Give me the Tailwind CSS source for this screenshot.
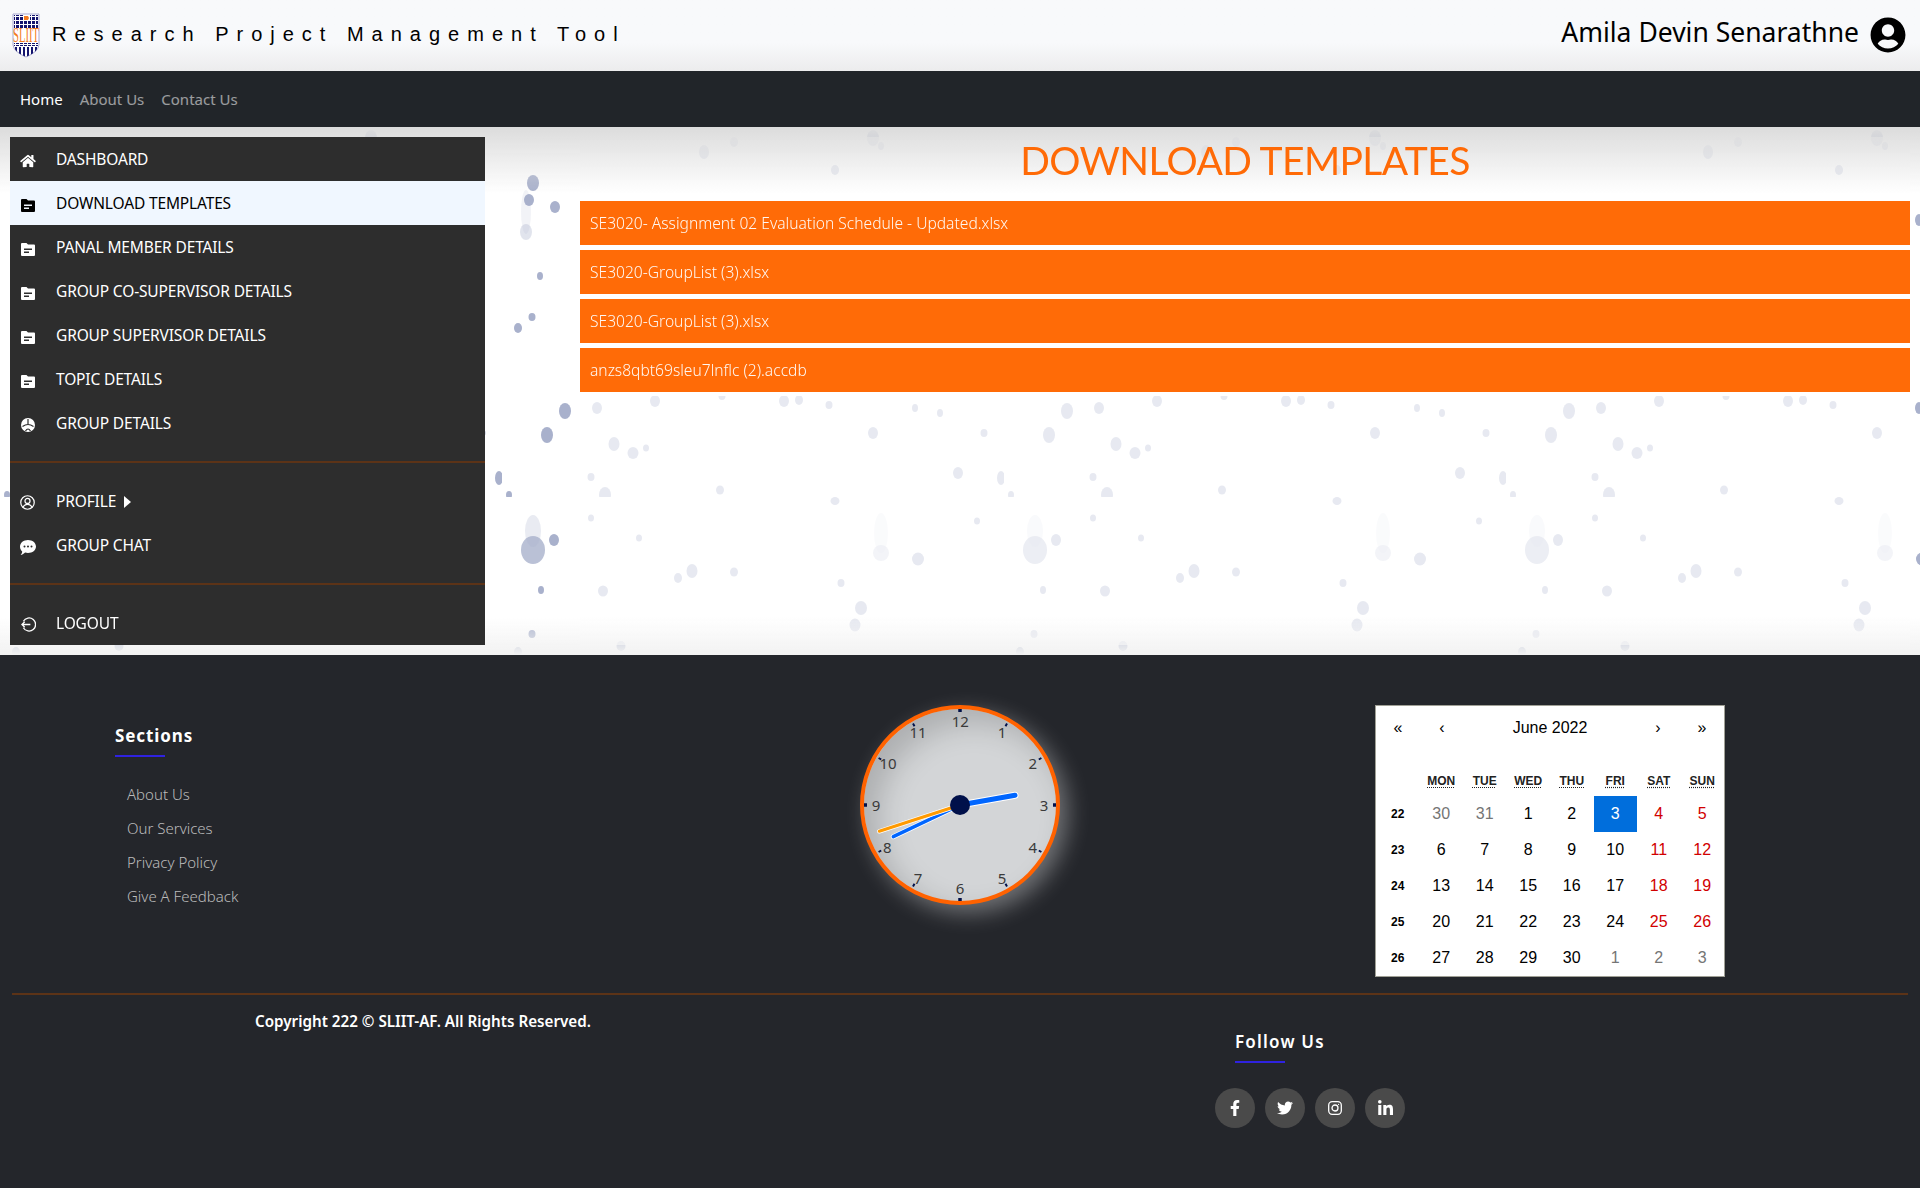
<!DOCTYPE html>
<html lang="en">
<head>
    <meta charset="UTF-8">
    <meta name="viewport" content="width=device-width, initial-scale=1.0">
    <title>Research Project Management Tool</title>
    <script src="https://cdn.jsdelivr.net/npm/@tailwindcss/browser@4"></script>
</head>
<body class="font-['Noto_Sans',sans-serif] bg-[#24262b] overflow-hidden">
    <!-- header -->
    <header class="h-[71px] flex items-center justify-between bg-gradient-to-b from-[#f8f9fb] from-60% to-[#ececed]">
        <div class="flex items-center pl-3">
            <svg class="w-7 h-[45px] mb-[1px]" viewBox="0 0 28 45">
                <defs>
                    <pattern id="logo-grid" patternUnits="userSpaceOnUse" width="4" height="4"><rect width="3" height="3" fill="#14146e"/></pattern>
                    <clipPath id="logo-shield"><path d="M1 1h26v31q-1 7-13 12Q2 39 1 32z"/></clipPath>
                </defs>
                <path d="M1 1h26v31q-1 7-13 12Q2 39 1 32z" fill="#fff" stroke="#a9a9d0"/>
                <g clip-path="url(#logo-shield)">
                    <rect x="2" y="2" width="24" height="13" fill="url(#logo-grid)"/>
                    <rect x="11" y="2" width="7" height="6" fill="#fff"/>
                    <path d="M12 3h4l1 2-1 2h-4z" fill="#f47b20"/>
                    <rect x="2" y="30" width="24" height="3" fill="url(#logo-grid)"/>
                    <path d="M3 34h2v10H3zM7 34h2v10H7zM11 34h2v10h-2zM15 34h2v10h-2zM19 34h2v10h-2zM23 34h2v10h-2z" fill="#14146e"/>
                </g>
                <text transform="scale(1,2)" x="14" y="14.500" text-anchor="middle" fill="#f47b20" font-family="Liberation Serif" font-size="10.600">SLIIT</text>
            </svg>
            <span class="ml-3 mb-1 font-['Liberation_Sans',sans-serif] text-[20px] tracking-[8px] text-black">Research Project Management Tool</span>
        </div>
        <div class="flex items-center pr-[14px]">
            <span class="mb-[6px] text-[26.500px] text-black">Amila Devin Senarathne</span>
            <svg class="w-9 h-9 ml-[11px] mb-[1px]" viewBox="0 0 496 512" fill="#000"><path d="M248 8C111 8 0 119 0 256s111 248 248 248 248-111 248-248S385 8 248 8zm0 96c48.6 0 88 39.4 88 88s-39.4 88-88 88-88-39.4-88-88 39.4-88 88-88zm0 344c-58.7 0-111.3-26.6-146.5-68.2 18.8-35.4 55.6-59.8 98.5-59.8 2.4 0 4.8.4 7.1 1.1 13 4.2 26.6 6.9 40.9 6.9 14.3 0 28-2.7 40.9-6.9 2.3-.7 4.7-1.1 7.1-1.1 42.9 0 79.7 24.4 98.5 59.8C359.3 421.4 306.7 448 248 448z"/></svg>
        </div>
    </header>

    <!-- navbar -->
    <nav class="h-14 bg-[#212529] flex items-center pl-5 gap-[17px] text-[15px]">
        <a class="text-white">Home</a>
        <a class="text-white/55">About Us</a>
        <a class="text-white/55">Contact Us</a>
    </nav>

    <!-- main -->
    <section class="relative h-[528px] bg-white overflow-hidden">
        <!-- raindrop background -->
        <svg class="absolute inset-0 w-full h-full" width="1920" height="528">
            <defs>
                <filter id="soft"><feGaussianBlur stdDeviation="0.7"/></filter>
                <pattern id="drops" patternUnits="userSpaceOnUse" x="502" y="52" width="502" height="318">
                    <g fill="#a9b1cc" filter="url(#soft)">
                        <ellipse cx="63" cy="232" rx="6" ry="8"/><ellipse cx="45" cy="256" rx="6" ry="8"/><ellipse cx="499" cy="299" rx="4" ry="7"/><ellipse cx="7" cy="316" rx="3" ry="4"/>
                        <ellipse cx="31" cy="53" rx="12" ry="14" opacity=".8"/><ellipse cx="31" cy="34" rx="8" ry="16" opacity=".25"/><ellipse cx="52" cy="43" rx="5" ry="6"/><ellipse cx="39" cy="93" rx="3" ry="4"/><ellipse cx="30" cy="137" rx="3.500" ry="4"/><ellipse cx="16" cy="155" rx="4" ry="5"/>
                        <ellipse cx="119" cy="149" rx="4.500" ry="5"/><ellipse cx="95" cy="229" rx="5" ry="6"/><ellipse cx="153" cy="222" rx="5" ry="6"/><ellipse cx="220" cy="217" rx="3.500" ry="4"/><ellipse cx="282" cy="222" rx="5" ry="6"/><ellipse cx="297" cy="221" rx="4" ry="5"/><ellipse cx="327" cy="226" rx="3.500" ry="4"/>
                        <ellipse cx="413" cy="229" rx="3" ry="4"/><ellipse cx="438" cy="234" rx="3" ry="4"/><ellipse cx="371" cy="254" rx="5" ry="6"/><ellipse cx="482" cy="254" rx="3.500" ry="4"/><ellipse cx="456" cy="294" rx="5" ry="6"/><ellipse cx="112" cy="265" rx="5.500" ry="7"/><ellipse cx="131" cy="274" rx="5.500" ry="6"/><ellipse cx="144" cy="269" rx="3" ry="3.500"/>
                        <ellipse cx="89" cy="298" rx="3.500" ry="4"/><ellipse cx="103" cy="316" rx="6" ry="8"/><ellipse cx="218" cy="311" rx="4" ry="4.500"/><ellipse cx="333" cy="4" rx="4.500" ry="4"/><ellipse cx="89" cy="21" rx="3" ry="3.500"/><ellipse cx="137" cy="41" rx="3" ry="3.500"/><ellipse cx="190" cy="74" rx="5.500" ry="7"/><ellipse cx="176" cy="81" rx="4" ry="5"/><ellipse cx="232" cy="75" rx="4" ry="4.500"/>
                        <ellipse cx="339" cy="86" rx="3.500" ry="4"/><ellipse cx="379" cy="56" rx="8" ry="8" opacity=".5"/><ellipse cx="379" cy="36" rx="7" ry="20" opacity=".2"/><ellipse cx="416" cy="62" rx="6" ry="6.500"/><ellipse cx="475" cy="24" rx="3" ry="3.500"/><ellipse cx="359" cy="111" rx="6" ry="7"/><ellipse cx="353" cy="128" rx="5.500" ry="6.500"/><ellipse cx="101" cy="94" rx="5" ry="5.500"/>
                    </g>
                </pattern>
                <pattern id="drops-top" patternUnits="userSpaceOnUse" x="502" y="0" width="502" height="64">
                    <g fill="#a9b1cc" filter="url(#soft)">
                        <ellipse cx="371" cy="11" rx="6" ry="8"/><ellipse cx="379" cy="19" rx="3" ry="4"/><ellipse cx="202" cy="25" rx="5" ry="7"/><ellipse cx="232" cy="15" rx="4" ry="5"/><ellipse cx="333" cy="43" rx="4" ry="5"/>
                    </g>
                </pattern>
                <linearGradient id="fade-top" x1="0" y1="0" x2="0" y2="1"><stop offset="0" stop-color="#dcdcdc"/><stop offset="1" stop-color="#dcdcdc" stop-opacity="0"/></linearGradient>
                <linearGradient id="fade-bottom" x1="0" y1="0" x2="0" y2="1"><stop offset="0" stop-color="#f2f2f2" stop-opacity="0"/><stop offset="1" stop-color="#f2f2f2"/></linearGradient>
            </defs>
            <rect x="0" y="269" width="1920" height="259" fill="url(#drops)"/>
            <rect x="0" y="0" width="1920" height="52" fill="url(#drops-top)"/>
            <!-- drops beside the file list -->
            <g fill="#a9b1cc" filter="url(#soft)">
                <ellipse cx="533" cy="56" rx="6" ry="8"/><ellipse cx="529" cy="73" rx="5" ry="6"/><ellipse cx="555" cy="80" rx="5" ry="6"/>
                <ellipse cx="526" cy="105" rx="6" ry="8" opacity=".35"/><ellipse cx="526" cy="85" rx="5" ry="22" opacity=".15"/>
                <ellipse cx="540" cy="149" rx="3" ry="4"/><ellipse cx="532" cy="190" rx="3.500" ry="4"/><ellipse cx="518" cy="201" rx="4" ry="5"/>
                <ellipse cx="1919" cy="93" rx="4" ry="6"/><ellipse cx="1919" cy="281" rx="4" ry="6"/>
            </g>
            <rect x="580" y="10" width="1330" height="508" fill="#fff" fill-opacity=".72"/>
            <rect x="0" y="0" width="1920" height="66" fill="url(#fade-top)"/>
            <rect x="0" y="490" width="1920" height="38" fill="url(#fade-bottom)"/>
        </svg>

        <div class="relative flex h-full pt-[10px]">
            <!-- sidebar -->
            <aside class="ml-[10px] w-[475px] h-[508px] bg-[#2d2d2d] text-white text-[15.500px] tracking-[-0.15px]">
                <a class="h-11 flex items-center">
                    <svg class="w-[16px] h-[14px] ml-[10px] mt-[4px]" viewBox="0 0 576 512" fill="currentColor"><path d="M280.37 148.26L96 300.11V464a16 16 0 0 0 16 16l112.06-.29a16 16 0 0 0 15.92-16V368a16 16 0 0 1 16-16h64a16 16 0 0 1 16 16v95.64a16 16 0 0 0 16 16.05L464 480a16 16 0 0 0 16-16V300L295.67 148.26a12.19 12.19 0 0 0-15.3 0zM571.6 251.47L488 182.56V44.05a12 12 0 0 0-12-12h-56a12 12 0 0 0-12 12v72.61L318.47 43a48 48 0 0 0-61 0L4.34 251.47a12 12 0 0 0-1.6 16.9l25.5 31A12 12 0 0 0 45.15 301l235.22-193.74a12.19 12.19 0 0 1 15.3 0L530.9 301a12 12 0 0 0 16.9-1.6l25.5-31a12 12 0 0 0-1.7-16.93z"/></svg>
                    <span class="ml-[20px] mt-[2px]">DASHBOARD</span>
                </a>
                <a class="h-11 flex items-center bg-[#f0f7ff] text-black">
                    <svg class="w-[14px] h-[14px] ml-[11px] mt-[3px]" viewBox="0 0 14 14" fill="currentColor"><path fill-rule="evenodd" d="M1 1h4.500l1.500 1.500h6a1 1 0 0 1 1 1V13a1 1 0 0 1-1 1H1a1 1 0 0 1-1-1V2a1 1 0 0 1 1-1zM3 6.500V8h8V6.500zM3 9.500V11h5V9.500z"/></svg>
                    <span class="ml-[21px] mt-[2px]">DOWNLOAD TEMPLATES</span>
                </a>
                <a class="h-11 flex items-center">
                    <svg class="w-[14px] h-[14px] ml-[11px] mt-[3px]" viewBox="0 0 14 14" fill="currentColor"><path fill-rule="evenodd" d="M1 1h4.500l1.500 1.500h6a1 1 0 0 1 1 1V13a1 1 0 0 1-1 1H1a1 1 0 0 1-1-1V2a1 1 0 0 1 1-1zM3 6.500V8h8V6.500zM3 9.500V11h5V9.500z"/></svg>
                    <span class="ml-[21px] mt-[2px]">PANAL MEMBER DETAILS</span>
                </a>
                <a class="h-11 flex items-center">
                    <svg class="w-[14px] h-[14px] ml-[11px] mt-[3px]" viewBox="0 0 14 14" fill="currentColor"><path fill-rule="evenodd" d="M1 1h4.500l1.500 1.500h6a1 1 0 0 1 1 1V13a1 1 0 0 1-1 1H1a1 1 0 0 1-1-1V2a1 1 0 0 1 1-1zM3 6.500V8h8V6.500zM3 9.500V11h5V9.500z"/></svg>
                    <span class="ml-[21px] mt-[2px]">GROUP CO-SUPERVISOR DETAILS</span>
                </a>
                <a class="h-11 flex items-center">
                    <svg class="w-[14px] h-[14px] ml-[11px] mt-[3px]" viewBox="0 0 14 14" fill="currentColor"><path fill-rule="evenodd" d="M1 1h4.500l1.500 1.500h6a1 1 0 0 1 1 1V13a1 1 0 0 1-1 1H1a1 1 0 0 1-1-1V2a1 1 0 0 1 1-1zM3 6.500V8h8V6.500zM3 9.500V11h5V9.500z"/></svg>
                    <span class="ml-[21px] mt-[2px]">GROUP SUPERVISOR DETAILS</span>
                </a>
                <a class="h-11 flex items-center">
                    <svg class="w-[14px] h-[14px] ml-[11px] mt-[3px]" viewBox="0 0 14 14" fill="currentColor"><path fill-rule="evenodd" d="M1 1h4.500l1.500 1.500h6a1 1 0 0 1 1 1V13a1 1 0 0 1-1 1H1a1 1 0 0 1-1-1V2a1 1 0 0 1 1-1zM3 6.500V8h8V6.500zM3 9.500V11h5V9.500z"/></svg>
                    <span class="ml-[21px] mt-[2px]">TOPIC DETAILS</span>
                </a>
                <a class="h-11 flex items-center">
                    <svg class="w-[14px] h-[14px] ml-[11px] mt-[3px]" viewBox="0 0 14 14"><circle cx="7" cy="7" r="7" fill="currentColor"/><path d="M7 1v5M1.500 8.500Q7 4.500 12.500 8.500M4.500 13q2.500-4 5 0" fill="none" stroke="#2d2d2d" stroke-width="1.200"/></svg>
                    <span class="ml-[21px] mt-[2px]">GROUP DETAILS</span>
                </a>

                <hr class="mt-4 mb-4 border-0 h-[2px] bg-[#5c3317]">

                <a class="h-11 flex items-center">
                    <svg class="w-[15px] h-[15px] ml-[10px] mt-[3px]" viewBox="0 0 16 16" fill="none" stroke="currentColor" stroke-width="1.300"><circle cx="8" cy="8" r="7.200"/><circle cx="8" cy="6.300" r="2.700"/><path d="M3.300 13.300q1-3.300 4.700-3.300t4.700 3.300"/></svg>
                    <span class="ml-[21px] mt-[2px]">PROFILE</span>
                    <svg class="w-[7px] h-3 ml-[8px] mt-[2px]" viewBox="0 0 7 12" fill="currentColor"><path d="M0 0l7 6-7 6z"/></svg>
                </a>
                <a class="h-11 flex items-center">
                    <svg class="w-4 h-[15px] ml-[10px] mt-[4px]" viewBox="0 0 16 15"><path fill-rule="evenodd" d="M8 0c4.400 0 8 2.800 8 6.500S12.400 13 8 13c-1 0-2-.15-2.900-.45C4 13.600 2.400 15 .6 15c1-1 1.600-2.200 1.600-3.500C.8 10.300 0 8.500 0 6.500 0 2.800 3.600 0 8 0zM4.500 5.500a1 1 0 1 0 0 2 1 1 0 0 0 0-2zM8 5.500a1 1 0 1 0 0 2 1 1 0 0 0 0-2zM11.500 5.500a1 1 0 1 0 0 2 1 1 0 0 0 0-2z" fill="currentColor"/></svg>
                    <span class="ml-[20px] mt-[2px]">GROUP CHAT</span>
                </a>

                <hr class="mt-4 mb-4 border-0 h-[2px] bg-[#5c3317]">

                <a class="h-11 flex items-center">
                    <svg class="w-[15px] h-[15px] ml-[11px] mt-[3px]" viewBox="0 0 16 16" fill="none" stroke="currentColor" stroke-width="1.400"><path d="M2.500 4.500A7 7 0 1 1 2.500 11.500M1 8h9M4 5L1 8l3 3"/></svg>
                    <span class="ml-[20px] mt-[2px]">LOGOUT</span>
                </a>
            </aside>

            <!-- templates -->
            <div class="ml-[95px] mr-[10px] flex-1">
                <h1 class="h-[64px] pb-[18px] flex items-center justify-center font-['Lato',sans-serif] text-[39px] text-[#ff6a06] tracking-[-0.6px]">DOWNLOAD TEMPLATES</h1>
                <div class="flex flex-col gap-[5px] text-white/95 font-light text-[15.600px]">
                    <a class="h-11 flex items-center px-[10px] pt-[2px] bg-[#ff6b07]">SE3020- Assignment 02 Evaluation Schedule - Updated.xlsx</a>
                    <a class="h-11 flex items-center px-[10px] pt-[2px] bg-[#ff6b07]">SE3020-GroupList (3).xlsx</a>
                    <a class="h-11 flex items-center px-[10px] pt-[2px] bg-[#ff6b07]">SE3020-GroupList (3).xlsx</a>
                    <a class="h-11 flex items-center px-[10px] pt-[2px] bg-[#ff6b07]">anzs8qbt69sleu7lnflc (2).accdb</a>
                </div>
            </div>
        </div>
    </section>

    <!-- footer -->
    <footer class="h-[533px] bg-[#24262b] pt-[50px]">
        <div class="flex">
            <div class="w-[860px] pl-[115px] pt-[19px]">
                <h4 class="text-[17px] leading-6 font-bold text-white tracking-[0.9px]">Sections</h4>
                <div class="w-[50px] h-[2px] mt-[7px] bg-[#2f22e0]"></div>
                <ul class="mt-5 pl-3 text-[15px] font-light text-[#bbbbbb]">
                    <li class="h-[34px] flex items-center">About Us</li>
                    <li class="h-[34px] flex items-center">Our Services</li>
                    <li class="h-[34px] flex items-center">Privacy Policy</li>
                    <li class="h-[34px] flex items-center">Give A Feedback</li>
                </ul>
            </div>

            <!-- clock -->
            <div class="w-[200px] h-[200px] rounded-full relative border-4 border-[#ff6200] box-border bg-[#d3d5d7] shadow-[inset_14px_14px_30px_rgba(0,0,0,0.18),8px_8px_22px_rgba(255,255,255,0.35)]">
                <svg class="absolute -inset-1 w-[200px] h-[200px]" viewBox="0 0 200 200">
                    <path d="M100 4v3M100 193v3M4 100h3M193 100h3" stroke="#00104a" stroke-width="3.500"/>
                    <path d="M145.500 21.200L147 18.600M178.800 54.500L181.400 53M178.800 145.500L181.400 147M145.500 178.800L147 181.400M54.500 178.800L53 181.400M21.200 145.500L18.600 147M21.200 54.500L18.600 53M54.500 21.200L53 18.600" stroke="#00104a" stroke-width="2"/>
                    <g fill="#3a3a3a" font-family="Noto Sans" font-size="15" text-anchor="middle" dominant-baseline="central">
                        <text x="100.300" y="15.700">12</text><text x="142" y="26.700">1</text><text x="172.700" y="57.700">2</text><text x="184" y="99.700">3</text><text x="172.700" y="141.700">4</text><text x="142" y="172.700">5</text><text x="100" y="183.300">6</text><text x="58" y="172.700">7</text><text x="27.300" y="141.700">8</text><text x="16" y="99.700">9</text><text x="28" y="57.700">10</text><text x="58" y="26.700">11</text>
                    </g>
                    <path d="M100 100L155 90.300" stroke="#fff" stroke-width="7" stroke-linecap="round"/>
                    <path d="M100 100L155 90.300" stroke="#0066ff" stroke-width="5" stroke-linecap="round"/>
                    <path d="M100 100L33.300 131.700" stroke="#fff" stroke-width="5" stroke-linecap="round"/>
                    <path d="M100 100L33.300 131.700" stroke="#0066ff" stroke-width="3.500" stroke-linecap="round"/>
                    <path d="M100 100L19.300 126.300" stroke="#fff" stroke-width="4.500" stroke-linecap="round"/>
                    <path d="M100 100L19.300 126.300" stroke="#ff9a00" stroke-width="3" stroke-linecap="round"/>
                    <circle cx="100" cy="100" r="10" fill="#00104a"/>
                </svg>
            </div>

            <!-- calendar -->
            <div class="ml-[315px] w-[350px] h-[272px] bg-white border border-[#a0a096] font-['Liberation_Sans',sans-serif] text-black">
                <div class="h-11 flex items-center text-center">
                    <span class="w-11">«</span>
                    <span class="w-11">‹</span>
                    <span class="flex-1">June 2022</span>
                    <span class="w-11">›</span>
                    <span class="w-11">»</span>
                </div>
                <div class="mt-4 h-[30px] grid grid-cols-8 items-center text-center text-[12px] font-bold text-[#222]">
                    <span></span>
                    <span><abbr class="underline decoration-dotted underline-offset-2">MON</abbr></span>
                    <span><abbr class="underline decoration-dotted underline-offset-2">TUE</abbr></span>
                    <span><abbr class="underline decoration-dotted underline-offset-2">WED</abbr></span>
                    <span><abbr class="underline decoration-dotted underline-offset-2">THU</abbr></span>
                    <span><abbr class="underline decoration-dotted underline-offset-2">FRI</abbr></span>
                    <span><abbr class="underline decoration-dotted underline-offset-2">SAT</abbr></span>
                    <span><abbr class="underline decoration-dotted underline-offset-2">SUN</abbr></span>
                </div>
                <div class="grid grid-cols-8 auto-rows-[36px] *:flex *:items-center *:justify-center">
                    <span class="text-[12px] font-bold">22</span><span class="text-[#757575]">30</span><span class="text-[#757575]">31</span><span>1</span><span>2</span><span class="bg-[#006edc] text-white">3</span><span class="text-[#d10000]">4</span><span class="text-[#d10000]">5</span>
                    <span class="text-[12px] font-bold">23</span><span>6</span><span>7</span><span>8</span><span>9</span><span>10</span><span class="text-[#d10000]">11</span><span class="text-[#d10000]">12</span>
                    <span class="text-[12px] font-bold">24</span><span>13</span><span>14</span><span>15</span><span>16</span><span>17</span><span class="text-[#d10000]">18</span><span class="text-[#d10000]">19</span>
                    <span class="text-[12px] font-bold">25</span><span>20</span><span>21</span><span>22</span><span>23</span><span>24</span><span class="text-[#d10000]">25</span><span class="text-[#d10000]">26</span>
                    <span class="text-[12px] font-bold">26</span><span>27</span><span>28</span><span>29</span><span>30</span><span class="text-[#757575]">1</span><span class="text-[#757575]">2</span><span class="text-[#757575]">3</span>
                </div>
            </div>
        </div>

        <hr class="mt-4 mx-3 border-0 h-[2px] bg-[#5c3317]">

        <div class="flex">
            <p class="ml-[255px] w-[960px] pt-[14px] text-[15.200px] leading-6 font-semibold text-white">Copyright 222 © SLIIT-AF. All Rights Reserved.</p>
            <div class="pt-[35px]">
                <h4 class="ml-5 text-[17px] leading-6 font-semibold text-white tracking-[1.200px]">Follow Us</h4>
                <div class="ml-5 w-[50px] h-[2px] mt-[7px] bg-[#2f22e0]"></div>
                <div class="flex gap-[10px] mt-[25px]">
                    <a class="w-10 h-10 rounded-full bg-[#4a4a4a] flex items-center justify-center">
                        <svg class="h-4" viewBox="0 0 320 512" fill="#fff"><path d="M279.14 288l14.22-92.66h-88.91v-60.13c0-25.35 12.42-50.06 52.24-50.06h40.42V6.26S260.43 0 225.36 0c-73.22 0-121.08 44.38-121.08 124.72v70.62H22.89V288h81.39v224h100.17V288z"/></svg>
                    </a>
                    <a class="w-10 h-10 rounded-full bg-[#4a4a4a] flex items-center justify-center">
                        <svg class="h-4" viewBox="0 0 512 512" fill="#fff"><path d="M459.37 151.716c.325 4.548.325 9.097.325 13.645 0 138.72-105.583 298.558-298.558 298.558-59.452 0-114.68-17.219-161.137-47.106 8.447.974 16.568 1.299 25.34 1.299 49.055 0 94.213-16.568 130.274-44.832-46.132-.975-84.792-31.188-98.112-72.772 6.498.974 12.995 1.624 19.818 1.624 9.421 0 18.843-1.3 27.614-3.573-48.081-9.747-84.143-51.98-84.143-102.985v-1.299c13.969 7.797 30.214 12.67 47.431 13.319-28.264-18.843-46.781-51.005-46.781-87.391 0-19.492 5.197-37.36 14.294-52.954 51.655 63.675 129.3 105.258 216.365 109.807-1.624-7.797-2.599-15.918-2.599-24.04 0-57.828 46.782-104.934 104.934-104.934 30.213 0 57.502 12.67 76.67 33.137 23.715-4.548 46.456-13.32 66.599-25.34-7.798 24.366-24.366 44.833-46.132 57.827 21.117-2.273 41.584-8.122 60.426-16.243-14.292 20.791-32.161 39.308-52.628 54.253z"/></svg>
                    </a>
                    <a class="w-10 h-10 rounded-full bg-[#4a4a4a] flex items-center justify-center">
                        <svg class="w-[14px] h-[14px]" viewBox="0 0 14 14" fill="none" stroke="#fff" stroke-width="1.300"><rect x=".7" y=".7" width="12.600" height="12.600" rx="3.500"/><circle cx="7" cy="7" r="3"/><circle cx="10.600" cy="3.400" r=".6" fill="#fff" stroke="none"/></svg>
                    </a>
                    <a class="w-10 h-10 rounded-full bg-[#4a4a4a] flex items-center justify-center">
                        <svg class="w-[15px] h-[15px] mb-[2px]" viewBox="0 0 448 448" fill="#fff"><path d="M100.280 448H7.400V148.900h92.880zM53.790 108.100C24.090 108.100 0 83.500 0 53.800a53.790 53.790 0 0 1 107.580 0c0 29.700-24.100 54.300-53.790 54.300zM447.900 448h-92.680V302.400c0-34.700-.7-79.200-48.290-79.200-48.290 0-55.690 37.700-55.690 76.700V448h-92.780V148.900h89.080v40.800h1.300c12.400-23.200 42.690-48.300 87.880-48.300 94 0 111.280 61.900 111.280 142.300V448z"/></svg>
                    </a>
                </div>
            </div>
        </div>
    </footer>
</body>
</html>
